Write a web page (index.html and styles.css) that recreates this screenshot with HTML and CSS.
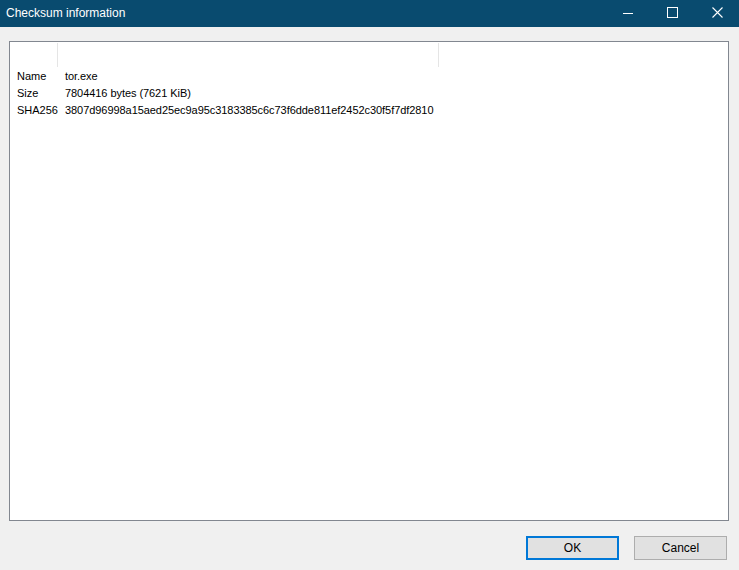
FILE: index.html
```html
<!DOCTYPE html>
<html lang="en">
<head>
    <meta charset="UTF-8">
    <title>Checksum information</title>
    <link rel="stylesheet" href="styles.css">
</head>
<body>
    <div class="window">
        <div class="titlebar">
            <span class="title">Checksum information</span>
            <div class="caption-buttons">
                <span class="cap-btn">
                    <svg width="10" height="10" viewBox="0 0 10 10"><path d="M0 5.5H10" stroke="#fff" stroke-width="1"/></svg>
                </span>
                <span class="cap-btn">
                    <svg width="11" height="11" viewBox="0 0 11 11"><rect x="0.5" y="0.5" width="10" height="10" fill="none" stroke="#fff" stroke-width="1"/></svg>
                </span>
                <span class="cap-btn">
                    <svg width="11" height="11" viewBox="0 0 11 11"><path d="M0.5 0.5L10.5 10.5M10.5 0.5L0.5 10.5" stroke="#fff" stroke-width="1.1"/></svg>
                </span>
            </div>
        </div>

        <div class="content">
            <div class="listview">
                <div class="list-header">
                    <div class="col col-key"></div>
                    <div class="col col-value"></div>
                </div>
                <div class="list-row">
                    <span class="key">Name</span>
                    <span class="value">tor.exe</span>
                </div>
                <div class="list-row">
                    <span class="key">Size</span>
                    <span class="value">7804416 bytes (7621 KiB)</span>
                </div>
                <div class="list-row">
                    <span class="key">SHA256</span>
                    <span class="value">3807d96998a15aed25ec9a95c3183385c6c73f6dde811ef2452c30f5f7df2810</span>
                </div>
            </div>

            <div class="buttons">
                <button class="btn btn-default">OK</button>
                <button class="btn">Cancel</button>
            </div>
        </div>
    </div>
</body>
</html>
```

FILE: styles.css
```css
body {
    margin: 0;
    font-family: "Liberation Sans", Arial, sans-serif;
    background-color: #f0f0f0;
}

.window {
    width: 739px;
    height: 570px;
    overflow: hidden;
    background-color: #f0f0f0;
}

.titlebar {
    height: 27px;
    background-color: #094b6f;
    display: flex;
    align-items: center;
    justify-content: space-between;
    color: #fff;
}

.title {
    font-size: 12px;
    padding-left: 6px;
    padding-bottom: 1px;
}

.caption-buttons {
    display: flex;
    height: 100%;
    margin-right: -1px;
}

.cap-btn {
    width: 45px;
    height: 100%;
    display: flex;
    align-items: center;
    justify-content: center;
    padding-bottom: 2px;
    box-sizing: border-box;
}

.content {
    padding: 14px 10px 0 9px;
}

.listview {
    height: 480px;
    box-sizing: border-box;
    border: 1px solid #828790;
    background-color: #fff;
    font-size: 11px;
    color: #000;
}

.list-header {
    display: flex;
    height: 25px;
}

.col {
    box-sizing: border-box;
    border-right: 1px solid #e5e5e5;
    margin-top: 1px;
    height: 24px;
}

.col-key {
    width: 48px;
}

.col-value {
    width: 381px;
}

.list-row {
    display: flex;
    height: 17px;
    align-items: center;
}

.key {
    width: 48px;
    padding-left: 7px;
    box-sizing: border-box;
}

.value {
    padding-left: 7px;
    letter-spacing: -0.06px;
}

.buttons {
    display: flex;
    justify-content: flex-end;
    gap: 15px;
    margin-top: 15px;
    margin-right: 2px;
}

.btn {
    width: 93px;
    height: 24px;
    box-sizing: border-box;
    border: 1px solid #adadad;
    background-color: #e1e1e1;
    font-family: "Liberation Sans", Arial, sans-serif;
    font-size: 12px;
    color: #000;
    padding: 0;
}

.btn-default {
    border: 2px solid #0078d7;
}
```
